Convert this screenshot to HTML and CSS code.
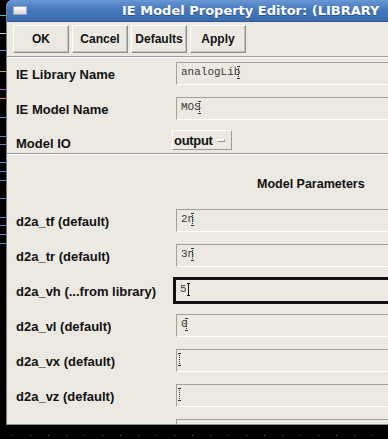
FILE: index.html
```html
<!DOCTYPE html>
<html>
<head>
<meta charset="utf-8">
<link rel="stylesheet" href="styles.css">
</head>
<body>
<div class="desktop">
  <span class="tick cyan" style="top:15px"></span>
  <span class="tick pale" style="top:33px"></span>
  <span class="tick blue" style="top:50px"></span>
  <span class="tick tan" style="top:71px"></span>
  <span class="tick purple" style="top:89px"></span>
  <span class="tick red" style="top:98px"></span>
  <span class="tick blue" style="top:117px"></span>
  <span class="tick blue" style="top:136px"></span>
  <span class="tick blue" style="top:144px"></span>
  <span class="tick blue" style="top:162px"></span>
  <span class="tick blue" style="top:171px"></span>
  <span class="tick blue" style="top:180px"></span>
  <span class="tick blue" style="top:198px"></span>
  <span class="tick blue" style="top:217px"></span>
  <span class="tick blue" style="top:225px"></span>
  <span class="tick blue" style="top:234px"></span>
  <span class="tick blue" style="top:243px"></span>
</div>
<div class="window">
  <div class="titlebar">
    <span class="winicon"></span>
    <span class="title">IE Model Property Editor: (LIBRARY</span>
  </div>
  <div class="toolbar">
    <button class="btn">OK</button>
    <button class="btn">Cancel</button>
    <button class="btn">Defaults</button>
    <button class="btn">Apply</button>
  </div>
  <div class="sep first"></div>
  <div class="form">
    <div class="row r-first">
      <span class="label">IE Library Name</span>
      <span class="field">analogLib<span class="caret"></span></span>
    </div>
    <div class="row">
      <span class="label">IE Model Name</span>
      <span class="field">MOS<span class="caret"></span></span>
    </div>
    <div class="row io">
      <span class="label io-label">Model IO</span>
      <span class="menubtn">output<span class="ind"></span></span>
    </div>
    <div class="sep"></div>
    <div class="heading">Model Parameters</div>
    <div class="row r-param">
      <span class="label">d2a_tf (default)</span>
      <span class="field">2n<span class="caret"></span></span>
    </div>
    <div class="row">
      <span class="label">d2a_tr (default)</span>
      <span class="field">3n<span class="caret"></span></span>
    </div>
    <div class="row">
      <span class="label">d2a_vh (...from library)</span>
      <span class="field focus">5<span class="caret solid"></span></span>
    </div>
    <div class="row">
      <span class="label">d2a_vl (default)</span>
      <span class="field">0<span class="caret"></span></span>
    </div>
    <div class="row">
      <span class="label">d2a_vx (default)</span>
      <span class="field"><span class="caret"></span></span>
    </div>
    <div class="row">
      <span class="label">d2a_vz (default)</span>
      <span class="field"><span class="caret"></span></span>
    </div>
    <div class="row">
      <span class="label"></span>
      <span class="field"></span>
    </div>
  </div>
</div>
<div class="dots"></div>
</body>
</html>
```

FILE: styles.css
```css
html, body {
  margin: 0;
  padding: 0;
}
body {
  background: #000;
  width: 388px;
  height: 439px;
  overflow: hidden;
  position: relative;
  font-family: "Liberation Sans", Arial, sans-serif;
}
.desktop {
  position: absolute;
  left: 0;
  top: 0;
  width: 7px;
  height: 439px;
}
.tick {
  position: absolute;
  left: 0;
  width: 6px;
  height: 1px;
}
.cyan { background: #5fb3c4; }
.pale { background: #c8d0dc; }
.blue { background: #5a86c8; }
.tan { background: #b8a878; }
.purple { background: #a05cc0; }
.red { background: #c8705a; }

.window {
  margin-left: 6px;
  width: 420px;
  height: 424px;
  background: #ece9e3;
  border-left: 1px solid #7a7a7a;
  border-bottom: 1px solid #8a8a8a;
  border-top-left-radius: 6px;
  overflow: hidden;
  box-sizing: content-box;
}
.titlebar {
  height: 21px;
  background: linear-gradient(#6a97d4, #4679be 45%, #3a6bae);
  border-bottom: 1px solid #2f5a96;
  display: flex;
  align-items: center;
}
.winicon {
  width: 12px;
  height: 7px;
  margin-left: 6px;
  background: linear-gradient(#ffffff, #d8d8d8);
  border: 1px solid #9aa8bc;
}
.title {
  margin-left: 95px;
  color: #fff;
  font-family: "DejaVu Sans", sans-serif;
  font-weight: bold;
  font-size: 13px;
  white-space: nowrap;
  text-shadow: 0 1px 0 #2a4f86;
}
.toolbar {
  display: flex;
  gap: 3px;
  padding: 3px 0 0 6px;
}
.btn {
  width: 56px;
  height: 28px;
  margin: 0;
  padding: 0;
  background: #ece9e3;
  border: 1px solid;
  border-color: #ffffff #8e8e8e #8e8e8e #ffffff;
  box-shadow: inset -1px -1px 0 #c4c1bb;
  font-family: "Liberation Sans", Arial, sans-serif;
  font-weight: bold;
  font-size: 12px;
  color: #111;
}
.sep {
  height: 1px;
  background: #9c9c9c;
  border-bottom: 1px solid #ffffff;
}
.sep.first {
  margin-top: 3px;
}
.form {
  display: flex;
  flex-direction: column;
}
.row {
  display: flex;
  align-items: center;
  height: 23px;
  margin-top: 12px;
}
.row.r-first {
  margin-top: 4px;
}
.row.r-param {
  margin-top: 13px;
}
.label {
  width: 160px;
  padding-left: 9px;
  padding-top: 1px;
  flex: none;
  font-weight: bold;
  font-size: 13px;
  color: #111;
  white-space: nowrap;
}
.field {
  flex: 1;
  height: 23px;
  box-sizing: border-box;
  border-top: 1px solid #a2a09c;
  border-left: 1px solid #a2a09c;
  border-bottom: 1px solid #ffffff;
  padding: 3px 0 0 4px;
  font-family: "Liberation Mono", "Courier New", monospace;
  font-size: 11px;
  line-height: 13px;
  color: #3a3a3a;
  white-space: nowrap;
}
.field.focus {
  outline: 2px solid #111;
  border-color: #111;
  margin-left: -1px;
}
.caret {
  display: inline-block;
  vertical-align: top;
  width: 0;
  height: 13px;
  border-left: 1px dotted #333;
  margin-left: -2px;
  position: relative;
}
.caret::before, .caret::after {
  content: "";
  position: absolute;
  left: -2px;
  width: 3px;
  height: 1px;
  background: repeating-linear-gradient(90deg, #333 0 1px, transparent 1px 2px);
}
.caret::before { top: 0; }
.caret::after { bottom: 0; }
.caret.solid {
  border-left: 1px solid #111;
  margin-left: 1px;
}
.caret.solid::before, .caret.solid::after {
  background: #111;
}
.io {
  align-items: flex-start;
  margin-top: 10px;
}
.io-label {
  padding-top: 6px;
}
.menubtn {
  margin-left: -4px;
  height: 20px;
  box-sizing: border-box;
  width: 60px;
  border: 1px solid;
  border-color: #ffffff #9a9a9a #9a9a9a #ffffff;
  display: flex;
  align-items: center;
  padding-left: 1px;
  font-weight: bold;
  font-size: 13px;
  letter-spacing: -0.3px;
  color: #111;
}
.ind {
  width: 8px;
  height: 3px;
  margin-left: 4px;
  border: 1px solid;
  border-color: #ffffff #9a9a9a #9a9a9a #ffffff;
  box-sizing: border-box;
}
.heading {
  margin-top: 18px;
  height: 23px;
  line-height: 23px;
  padding-left: 250px;
  font-weight: bold;
  font-size: 12.5px;
  color: #111;
}
.dots {
  margin-top: 10px;
  margin-left: 12px;
  height: 1px;
  width: 376px;
  background: repeating-linear-gradient(90deg, #5a5a5a 0 1px, transparent 1px 18px);
}
```
